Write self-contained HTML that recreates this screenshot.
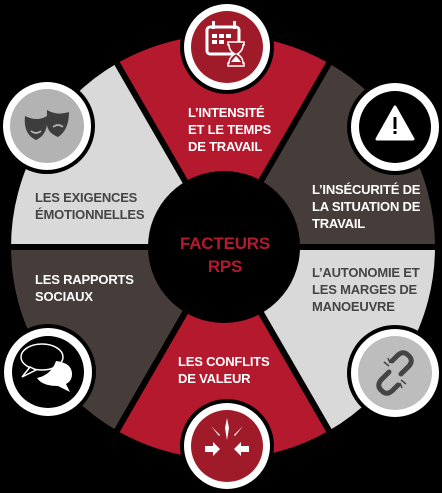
<!DOCTYPE html>
<html><head><meta charset="utf-8"><style>
html,body{margin:0;padding:0;background:#000;}
body{width:442px;height:493px;position:relative;overflow:hidden;font-family:"Liberation Sans Narrow","Liberation Sans",sans-serif;font-weight:bold;}
.t{position:absolute;font-size:13px;line-height:17px;white-space:nowrap;letter-spacing:-0.2px}
.w{color:#fff}.g{color:#444}
</style></head><body>
<svg width="442" height="493" style="position:absolute;left:0;top:0">
<g stroke="#000" stroke-width="6" stroke-linejoin="miter">
<!-- center 223,247 R215 -->
<path d="M223 247 L330.5 60.8 A215 215 0 0 0 115.5 60.8 Z" fill="#b5192d"/>
<path d="M223 247 L438 247 A215 215 0 0 0 330.5 60.8 Z" fill="#463d3a"/>
<path d="M223 247 L115.5 60.8 A215 215 0 0 0 8 247 Z" fill="#d9d9d9"/>
<path d="M223 247 L8 247 A215 215 0 0 0 115.5 433.2 Z" fill="#463d3a"/>
<path d="M223 247 L115.5 433.2 A215 215 0 0 0 330.5 433.2 Z" fill="#b5192d"/>
<path d="M223 247 L330.5 433.2 A215 215 0 0 0 438 247 Z" fill="#d9d9d9"/>
</g>
<circle cx="224" cy="247" r="76" fill="#000"/>
<!-- icon circles -->
<circle cx="227" cy="47" r="47" fill="#000"/><circle cx="227" cy="47" r="43" fill="#fff"/><circle cx="227" cy="47" r="36" fill="#a01b29"/>
<circle cx="47" cy="126" r="48" fill="#000"/><circle cx="47" cy="126" r="44" fill="#fff"/><circle cx="47" cy="126" r="37" fill="#b3b3b3"/>
<circle cx="395" cy="127" r="48" fill="#000"/><circle cx="395" cy="127" r="44" fill="#fff"/><circle cx="395" cy="127" r="36" fill="#000"/>
<circle cx="48" cy="372" r="48" fill="#000"/><circle cx="48" cy="372" r="44" fill="#fff"/><circle cx="48" cy="372" r="36" fill="#000"/>
<circle cx="395" cy="373" r="48" fill="#000"/><circle cx="395" cy="373" r="44" fill="#fff"/><circle cx="395" cy="373" r="37" fill="#bdbdbd"/>
<circle cx="227" cy="446" r="47" fill="#000"/><circle cx="227" cy="446" r="43" fill="#fff"/><circle cx="227" cy="446" r="36" fill="#a01b29"/>
<!-- calendar -->
<g fill="#fff">
<rect x="207" y="27" width="32" height="27" rx="3" fill="none" stroke="#fff" stroke-width="3"/>
<rect x="212" y="21" width="3" height="8"/><rect x="233" y="21" width="3" height="8"/>
<rect x="212" y="34" width="5" height="4"/><rect x="219" y="34" width="5" height="4"/><rect x="226" y="34" width="5" height="4"/>
<rect x="212" y="40" width="5" height="4"/><rect x="219" y="40" width="5" height="4"/>
<path d="M228 42 h16 v3 h-1 q0 6 -6 9 q6 3 6 9 h1 v3 h-16 v-3 h1 q0 -6 6 -9 q-6 -3 -6 -9 h-1 z" fill="#a01b29" stroke="#fff" stroke-width="1.5"/>
<path d="M231 62 q3 -4 5 -6 q2 2 5 6 z"/>
</g>
<!-- masks -->
<g fill="#3d3d3d">
<path d="M25 116 q12 6 22 0 q2 18 -11 24 q-13 -6 -11 -24z"/>
<path d="M47 110 q10 6 22 2 q0 18 -11 25 q-10 -4 -11 -12z"/>
</g>
<g stroke="#b3b3b3" stroke-width="1.6" fill="none"><path d="M31 131 q5 4 10 0"/><path d="M53 127 q5 -4 10 0"/></g>
<!-- warning -->
<path d="M395 107 L413 139 L377 139 Z" fill="#fff" stroke="#fff" stroke-width="3" stroke-linejoin="round"/>
<rect x="393.5" y="117" width="3" height="12" fill="#000"/><rect x="393.5" y="131" width="3" height="3" fill="#000"/>
<!-- chat -->
<ellipse cx="42" cy="357" rx="21" ry="13" fill="none" stroke="#fff" stroke-width="1.5"/>
<path d="M30 367 l-8 10 l14 -7z" fill="#000" stroke="#fff" stroke-width="1.5"/>
<path d="M56 361 q16 2 16 13 q0 7 -6 10 l4 8 l-12 -6 q-16 0 -21 -8 q14 -3 19 -17z" fill="#fff"/>
<!-- broken chain -->
<g fill="none" stroke="#444" stroke-width="5" stroke-linecap="round">
<path d="M389 372 l-8 8 q-5 6 1 11 q5 5 11 -1 l5 -5"/>
<path d="M401 374 l8 -8 q5 -6 -1 -11 q-5 -5 -11 1 l-5 5"/>
</g>
<g stroke="#444" stroke-width="1.5"><path d="M384 362 l5 4 M388 358 l2 5 M406 384 l-5 -4 M402 388 l-2 -5"/></g>
<!-- conflicts -->
<g fill="#fff">
<path d="M227 418 l2 10 l-2 12 l-2 -12z"/>
<path d="M211 426 l9 9 l-1 1 z"/><path d="M243 426 l-9 9 l1 1z"/>
<path d="M205 446 h8 v-4 l7 7 l-7 7 v-4 h-8z"/>
<path d="M249 446 h-8 v-4 l-7 7 l7 7 v-4 h8z"/>
</g>
</svg>
<div class="t w" style="left:188px;top:104px">L’INTENSITÉ<br>ET LE TEMPS<br>DE TRAVAIL</div>
<div class="t g" style="left:35px;top:189px">LES EXIGENCES<br>ÉMOTIONNELLES</div>
<div class="t w" style="left:312px;top:181px">L’INSÉCURITÉ DE<br>LA SITUATION DE<br>TRAVAIL</div>
<div class="t w" style="left:35px;top:271px">LES RAPPORTS<br>SOCIAUX</div>
<div class="t g" style="left:312px;top:264px">L’AUTONOMIE ET<br>LES MARGES DE<br>MANOEUVRE</div>
<div class="t w" style="left:178px;top:353px">LES CONFLITS<br>DE VALEUR</div>
<div class="t" style="left:150px;width:150px;text-align:center;top:232px;color:#b5192d;font-size:17px;line-height:23px">FACTEURS<br>RPS</div>
</body></html>
